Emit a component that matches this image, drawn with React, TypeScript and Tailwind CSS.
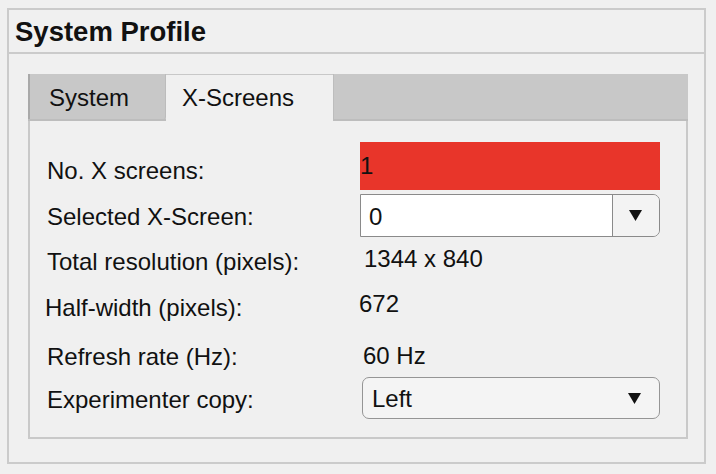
const Arrow = () => (
  <svg width="13" height="11" viewBox="0 0 13 11" className="shrink-0">
    <polygon points="0,0 13,0 6.5,11" fill="#111" />
  </svg>
);

function Row({
  height,
  label,
  labelShift = "",
  children,
}: {
  height: string;
  label: string;
  labelShift?: string;
  children: React.ReactNode;
}) {
  return (
    <div className={`flex items-center ${height}`}>
      <div className={`w-[313px] shrink-0 leading-none ${labelShift}`}>{label}</div>
      {children}
    </div>
  );
}

export default function App() {
  return (
    <div className="w-[716px] h-[474px] bg-[#f0f0f0] pt-[8px] pl-[7px] text-[#111] font-['Liberation_Sans',Arial,sans-serif]">
      <div className="w-[699px] h-[456px] border-2 border-[#cbcbcb] flex flex-col">
        <div className="h-[44px] shrink-0 border-b-2 border-[#cbcbcb] pl-[6px] pt-[2px] flex items-center text-[27.5px] font-bold leading-none">
          System Profile
        </div>
        <div className="flex-1 pt-[20px] pl-[19px] pr-[16px] pb-[23px]">
          <div className="h-full flex flex-col">
            {/* tabs */}
            <div className="h-[47px] shrink-0 flex bg-[#c8c8c8] border-b-2 border-[#bdbdbd] text-[24px] leading-none">
              <div className="w-[138px] border-l-2 border-[#a9a9a9] border-r border-r-[#bcbcbc] rounded-br-[3px] pl-[19px] pt-[2px] flex items-center">
                System
              </div>
              <div className="w-[167px] relative -mb-[2px] mt-[1px] bg-[#f0f0f0] pl-[16px] flex items-center">
                X-Screens
              </div>
              <div className="flex-1 border-l border-[#bdbdbd]" />
            </div>
            {/* content */}
            <div className="flex-1 border-x-2 border-b-2 border-[#c9c9c9] pt-[21px] pl-[17px] text-[24px]">
              <Row height="h-[48px]" label="No. X screens:" labelShift="mt-[9px]">
                <div className="w-[300px] h-[48px] bg-[#e8352a] flex items-center leading-none">1</div>
              </Row>
              <Row height="h-[43px] mt-[4px]" label="Selected X-Screen:" labelShift="mt-[2px]">
                <div className="w-[300px] h-[43px] flex border border-[#8a8a8a] rounded-r-[7px] overflow-hidden">
                  <div className="flex-1 bg-white pl-[8px] pt-[2px] flex items-center leading-none">0</div>
                  <div className="w-[47px] border-l border-[#8a8a8a] bg-[#f3f3f3] flex items-center justify-center pr-[2px]">
                    <Arrow />
                  </div>
                </div>
              </Row>
              <Row height="h-[44px]" label="Total resolution (pixels):" labelShift="mt-[6px]">
                <div className="leading-none pl-[4px]">1344 x 840</div>
              </Row>
              <Row height="h-[46px]" label="Half-width (pixels):" labelShift="mt-[8px] -ml-[2px]">
                <div className="leading-none pl-[1px]">672</div>
              </Row>
              <Row height="h-[50px]" label="Refresh rate (Hz):" labelShift="mt-[10px]">
                <div className="leading-none pl-[3px] mt-[8px]">60 Hz</div>
              </Row>
              <Row height="h-[42px]" label="Experimenter copy:" labelShift="mt-[4px]">
                <div className="ml-[2px] w-[298px] h-[42px] border border-[#959595] rounded-[7px] bg-[#f4f4f4] flex items-center justify-between pl-[9px] pr-[18px] leading-none">
                  <span className="pt-[2px]">Left</span>
                  <Arrow />
                </div>
              </Row>
            </div>
          </div>
        </div>
      </div>
    </div>
  );
}
